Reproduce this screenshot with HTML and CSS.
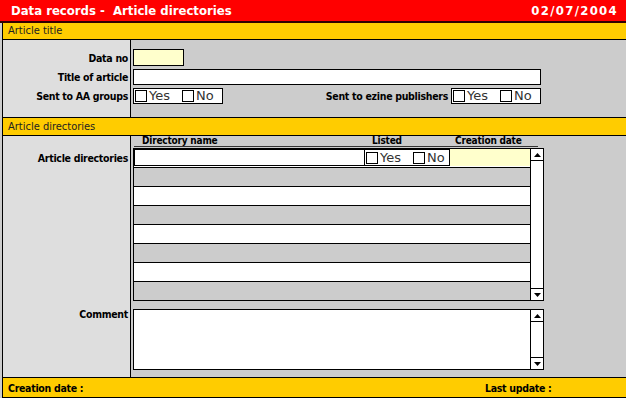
FILE: index.html
```html
<!DOCTYPE html>
<html lang="en">
<head>
  <meta charset="UTF-8">
  <title>Data records - Article directories</title>
  <link rel="stylesheet" href="styles.css">
</head>
<body>

<div class="titlebar">
  <span>Data records -&nbsp; Article directories</span>
  <span class="today">02/07/2004</span>
</div>

<div class="page">
  <div class="section-bar">Article title</div>

  <div class="form-block block-title">
    <label class="lbl" for="dataNo">Data no</label>
    <div class="fld"><input type="text" id="dataNo" class="txt txt-short"></div>

    <label class="lbl" for="articleTitle">Title of article</label>
    <div class="fld"><input type="text" id="articleTitle" class="txt txt-long"></div>

    <label class="lbl">Sent to AA groups</label>
    <div class="fld fld-split">
      <div class="yesno">
        <span class="chk"></span><span class="opt">Yes</span>
        <span class="chk"></span><span class="opt">No</span>
      </div>
      <div class="pair">
        <span class="lbl-inline">Sent to ezine publishers</span>
        <div class="yesno">
          <span class="chk"></span><span class="opt">Yes</span>
          <span class="chk"></span><span class="opt">No</span>
        </div>
      </div>
    </div>
  </div>

  <div class="section-bar section-bar-2">Article directories</div>

  <div class="form-block block-dirs">
    <div></div>
    <div class="fld">
      <div class="list-head">
        <span class="col-name">Directory name</span>
        <span class="col-listed">Listed</span>
        <span class="col-date">Creation date</span>
      </div>
    </div>

    <label class="lbl lbl-dirs">Article directories</label>
    <div class="fld">
      <div class="listbox">
        <div class="rows">
          <div class="row row-edit">
            <input type="text" class="cell-name">
            <div class="cell-listed">
              <span class="chk"></span><span class="opt">Yes</span>
              <span class="chk"></span><span class="opt">No</span>
            </div>
            <input type="text" class="cell-date">
          </div>
          <div class="row row-gray"></div>
          <div class="row"></div>
          <div class="row row-gray"></div>
          <div class="row"></div>
          <div class="row row-gray"></div>
          <div class="row"></div>
          <div class="row row-gray"></div>
        </div>
        <div class="scrollbar">
          <div class="sb-btn sb-up"><svg width="7" height="4"><path d="M0 4H7L3.5 0Z"/></svg></div>
          <div class="sb-track"></div>
          <div class="sb-btn sb-down"><svg width="7" height="4"><path d="M0 0H7L3.5 4Z"/></svg></div>
        </div>
      </div>
    </div>

    <label class="lbl lbl-comment" for="comment">Comment</label>
    <div class="fld">
      <div class="textarea">
        <div class="ta-body" id="comment"></div>
        <div class="scrollbar">
          <div class="sb-btn sb-up"><svg width="7" height="4"><path d="M0 4H7L3.5 0Z"/></svg></div>
          <div class="sb-track"></div>
          <div class="sb-btn sb-down"><svg width="7" height="4"><path d="M0 0H7L3.5 4Z"/></svg></div>
        </div>
      </div>
    </div>
  </div>

  <div class="footer">
    <span class="foot-created">Creation date :</span>
    <span>Last update :</span>
  </div>
</div>

</body>
</html>
```

FILE: styles.css
```css
body {
  margin: 0;
  background-color: #cccccc;
  font-family: "DejaVu Sans Condensed", "DejaVu Sans", sans-serif;
  font-size: 11px;
  color: #000;
}

.titlebar {
  height: 21px;
  display: flex;
  justify-content: space-between;
  align-items: center;
  padding: 0 9px 0 11px;
  background-color: #ff0000;
  border-bottom: 2px solid #330000;
  color: #fff;
  font-weight: bold;
  font-size: 13px;
}

.today {
  letter-spacing: 1.3px;
  margin-right: -1px;
}

.page {
  margin-left: 2px;
  border-left: 1px solid #000;
}

.section-bar {
  height: 16px;
  line-height: 16px;
  padding-left: 5px;
  background-color: #ffcc00;
  border-bottom: 1px solid #000;
  color: #222;
}

.section-bar-2 {
  height: 17px;
  line-height: 17px;
  border-top: 1px solid #000;
}

.form-block {
  display: grid;
  grid-template-columns: 128px 1fr;
  background: linear-gradient(to right, #dedede 0, #dedede 127px, #000 127px, #000 128px, #cccccc 128px);
}

.block-title {
  padding: 9px 0 13px;
  row-gap: 3px;
}

.block-dirs {
  padding: 0 0 7px;
}

.lbl,
.lbl-inline,
.footer {
  font-weight: bold;
  font-size: 10.5px;
  letter-spacing: -0.3px;
}

.lbl {
  text-align: right;
  padding-right: 3px;
  align-self: center;
}

.lbl-dirs {
  align-self: start;
  padding-top: 4px;
}

.lbl-comment {
  align-self: start;
  padding-top: 7px;
}

.fld {
  padding-left: 2px;
  display: flex;
}

.fld-split {
  width: 408px;
  justify-content: space-between;
}

.txt {
  box-sizing: border-box;
  margin: 0;
  padding: 0 2px;
  border: 1px solid #000;
  background-color: #fff;
  font: inherit;
}

.txt-short {
  width: 51px;
  height: 17px;
  background-color: #ffffcc;
}

.txt-long {
  width: 408px;
  height: 16px;
}

.pair {
  display: flex;
  align-items: center;
  gap: 3px;
}

.yesno {
  box-sizing: border-box;
  width: 90px;
  height: 16px;
  display: flex;
  align-items: center;
  padding-left: 1px;
  border: 1px solid #000;
  background-color: #fff;
}

.chk {
  box-sizing: border-box;
  width: 12px;
  height: 12px;
  border: 1px solid #000;
  background-color: #fff;
  flex: none;
}

.opt {
  font-family: "DejaVu Sans", sans-serif;
  font-size: 13px;
  line-height: 14px;
  color: #333;
  margin: 0 12px 0 2px;
}

/* directory list */
.list-head {
  display: flex;
  width: 404px;
  height: 10px;
  margin-left: 1px;
  margin-bottom: 1px;
  border-bottom: 1px solid #333;
  font-weight: bold;
  font-size: 10px;
  line-height: 10px;
  letter-spacing: -0.2px;
}

.col-name {
  width: 231px;
  padding-left: 8px;
  box-sizing: border-box;
}

.col-listed {
  width: 85px;
  padding-left: 7px;
  box-sizing: border-box;
}

.col-date {
  padding-left: 5px;
}

.listbox,
.textarea {
  display: flex;
  width: 411px;
  box-sizing: border-box;
  border: 1px solid #000;
  background-color: #fff;
}

.listbox {
  height: 153px;
}

.textarea {
  height: 61px;
  margin-top: 8px;
}

.rows {
  width: 396px;
  display: flex;
  flex-direction: column;
}

.row {
  height: 18px;
  border-bottom: 1px solid #000;
  background-color: #fff;
}

.row:last-child {
  border-bottom: none;
}

.row-gray {
  background-color: #cccccc;
}

.row-edit {
  display: flex;
  align-items: flex-start;
}

.cell-name,
.cell-date {
  box-sizing: border-box;
  margin: 0;
  height: 17px;
  border: 1px solid #000;
  font: inherit;
}

.cell-name {
  width: 231px;
  background-color: #fff;
}

.cell-date {
  width: 80px;
  border: none;
  background-color: #ffffcc;
}

.cell-listed {
  box-sizing: border-box;
  width: 85px;
  height: 17px;
  display: flex;
  align-items: center;
  padding-left: 1px;
  border: 1px solid #000;
  border-left: none;
}

.cell-listed .opt:last-child {
  margin-right: 0;
}

.ta-body {
  flex: 1;
}

.scrollbar {
  width: 12px;
  display: flex;
  flex-direction: column;
  border-left: 1px solid #000;
  background-color: #fff;
}

.sb-btn {
  height: 11px;
  display: flex;
  align-items: center;
  justify-content: center;
}

.sb-up {
  border-bottom: 1px solid #000;
}

.sb-down {
  border-top: 1px solid #000;
}

.sb-track {
  flex: 1;
}

.footer {
  height: 19px;
  display: flex;
  align-items: center;
  padding-left: 5px;
  background-color: #ffcc00;
  border-top: 1px solid #000;
  border-bottom: 1px solid #000;
}

.foot-created {
  width: 477px;
}
```
